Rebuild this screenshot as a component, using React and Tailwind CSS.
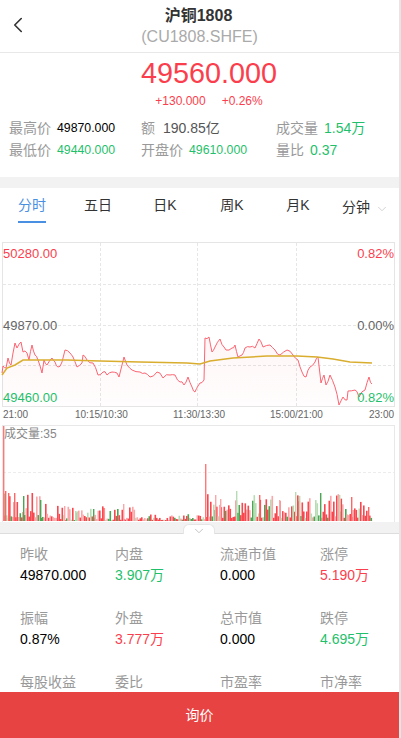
import React from "react";
import { ChevronDown, ChevronLeft } from "lucide-react";

const font = "font-['Liberation_Sans','Noto_Sans_CJK_SC',sans-serif]";

// price line, coordinates read off the chart
const pricePoints = [
  [2,373],[3,366],[6,368],[8,358],[11,365],[13,353],[15,343],[17,348],[21,342],[23,352],[27,353],[29,360],[32,345],[35,355],[38,360],[42,373],[44,360],[47,365],[52,358],[55,362],[58,367],[62,362],[65,350],[70,353],[73,357],[77,367],[82,363],[83,355],[87,360],[93,363],[98,375],[103,372],[107,375],[112,372],[117,373],[119,377],[124,357],[127,365],[132,370],[140,372],[145,373],[150,377],[157,372],[163,378],[170,375],[175,375],[180,382],[184,385],[188,377],[192,387],[195,392],[198,386],[200,383],[204,380],[205,338],[209,337],[212,352],[215,347],[220,339],[224,347],[226,350],[232,348],[235,345],[238,357],[242,355],[245,348],[250,347],[255,348],[259,339],[263,347],[270,345],[275,350],[280,355],[287,350],[293,355],[298,360],[302,372],[306,377],[310,367],[315,362],[318,357],[321,383],[324,375],[326,385],[330,375],[335,387],[339,405],[343,397],[347,400],[348,391],[355,390],[359,397],[365,390],[369,377],[372,384],
];

// average line
const avgPoints = [
  [2,375],[7,368],[15,365],[23,360],[67,360],[100,361],[140,362],[187,363],[200,364],[210,361],[233,358],[267,356],[297,356],[317,357],[333,359],[350,362],[372,363],
];

const toLine = (pts) => pts.map((p) => p.join(",")).join(" ");

// the small seeded generator keeps bars and jitter the same on each load
const makeRandom = (start) => {
  let seed = start;
  return () => {
    seed = (seed * 9301 + 49297) % 233280;
    return seed / 233280;
  };
};

// adds the fine zigzag between the read points
const jagged = (pts) => {
  const rand = makeRandom(11);
  const out = [];
  pts.forEach((p, i) => {
    out.push(p);
    const q = pts[i + 1];
    if (q && q[0] - p[0] >= 3 && Math.abs(q[1] - p[1]) < 20) {
      out.push([p[0] + (q[0] - p[0]) / 2, (p[1] + q[1]) / 2 + (rand() - 0.5) * 4]);
    }
  });
  return out;
};

const priceLine = jagged(pricePoints);

const volumeBars = () => {
  const next = makeRandom(35);
  const bars = [];
  for (let x = 3; x < 371; x += 1.5) {
    const r = next();
    let max = 14;
    if (x < 60) max = 26;
    else if (x > 205) max = 24;
    else if (x > 135) max = 6;
    const h = Math.pow(next(), 1.8) * max + (x > 205 || x < 60 ? 3 : 1);
    const color = r < 0.5 ? "#f8474e" : r < 0.66 ? "#4aa653" : r < 0.88 ? "#fba6a8" : "#b7dcb4";
    bars.push({ x, h, color });
  }
  return bars;
};

const tallBars = [
  { x: 3, h: 95, color: "#f77" },
  { x: 5, h: 30, color: "#f66" },
  { x: 8, h: 28, color: "#f66" },
  { x: 14, h: 28, color: "#f66" },
  { x: 23, h: 25, color: "#4aa653" },
  { x: 40, h: 21, color: "#4aa653" },
  { x: 64, h: 15, color: "#fba6a8" },
  { x: 75, h: 10, color: "#b7dcb4" },
  { x: 93, h: 12, color: "#4aa653" },
  { x: 103, h: 13, color: "#f66" },
  { x: 123, h: 17, color: "#fba6a8" },
  { x: 205, h: 57, color: "#f77" },
  { x: 215, h: 26, color: "#fba6a8" },
  { x: 220, h: 22, color: "#fba6a8" },
  { x: 236, h: 30, color: "#b7dcb4" },
  { x: 259, h: 26, color: "#f66" },
  { x: 279, h: 21, color: "#fba6a8" },
  { x: 295, h: 29, color: "#b7dcb4" },
  { x: 299, h: 25, color: "#b7dcb4" },
  { x: 320, h: 28, color: "#4aa653" },
  { x: 339, h: 26, color: "#b7dcb4" },
  { x: 351, h: 24, color: "#f66" },
  { x: 368, h: 14, color: "#f66" },
];

const Stat = ({ label, value, className, width }) => (
  <div className={`flex items-center ${width}`}>
    <span className="text-sm text-[#999] mr-[6px]">{label}</span>
    <span className={className}>{value}</span>
  </div>
);

const Quote = ({ label, value, color = "text-black" }) => (
  <div className="h-16">
    <div className="text-sm leading-5 text-[#999] whitespace-nowrap">{label}</div>
    <div className={`text-sm leading-5 mt-[1px] ${color}`}>{value}</div>
  </div>
);

const quotes = [
  ["昨收", "49870.000", "text-black"],
  ["内盘", "3.907万", "text-[#1fbf6b]"],
  ["流通市值", "0.000", "text-black"],
  ["涨停", "5.190万", "text-[#fb3e4d]"],
  ["振幅", "0.87%", "text-black"],
  ["外盘", "3.777万", "text-[#fb3e4d]"],
  ["总市值", "0.000", "text-black"],
  ["跌停", "4.695万", "text-[#1fbf6b]"],
  ["每股收益", "--", "text-black"],
  ["委比", "--", "text-black"],
  ["市盈率", "--", "text-black"],
  ["市净率", "--", "text-black"],
];

const tabs = [
  ["五日", "ml-[38px]"],
  ["日K", "ml-[39px]"],
  ["周K", "ml-[39px]"],
  ["月K", "ml-[38px]"],
];

export default function App() {
  return (
    <div className={`relative w-[401px] h-[738px] overflow-hidden bg-[#e6e6e6] ${font}`}>
      <div className="relative w-[399px] h-[738px] overflow-hidden bg-white">
        {/* header */}
        <div className="relative h-[53px] border-b border-[#e8e8e8] text-center">
          <ChevronLeft className="absolute left-[5px] top-[12px] w-[26px] h-[26px] text-[#333]" strokeWidth={1.5} />
          <div className="pt-[6px] pr-[2px] text-base leading-[20px] font-bold text-[#333]">沪铜1808</div>
          <div className="text-base leading-[21px] text-[#aaa]">(CU1808.SHFE)</div>
        </div>

        {/* price */}
        <div className="pl-[19px] text-center">
          <div className="text-[28.8px] leading-[40px] text-[#fb3e4d]">49560.000</div>
          <div className="flex justify-center gap-[16px] text-xs leading-[16px] text-[#fb3e4d]">
            <span>+130.000</span>
            <span>+0.26%</span>
          </div>
        </div>

        {/* stats */}
        <div className="pl-[9px] pt-[8px] h-[68px] leading-[22px]">
          <div className="flex h-[22px]">
            <Stat label="最高价" value="49870.000" className="text-[12.3px] text-black" width="w-[132px]" />
            <Stat label="额" value="190.85亿" className="text-sm text-[#555] ml-[2px]" width="w-[135px]" />
            <Stat label="成交量" value="1.54万" className="text-sm text-[#1fbf6b]" />
          </div>
          <div className="flex h-[22px]">
            <Stat label="最低价" value="49440.000" className="text-[12.3px] text-[#1fbf6b]" width="w-[132px]" />
            <Stat label="开盘价" value="49610.000" className="text-[12.3px] text-[#1fbf6b]" width="w-[135px]" />
            <Stat label="量比" value="0.37" className="text-sm text-[#1fbf6b]" />
          </div>
        </div>

        <div className="h-[11px] bg-[#f2f2f2]" />

        {/* tabs */}
        <div className="flex items-start h-[44px] text-sm text-[#333]">
          <div className="ml-[18px] w-[28px] h-[35px] pt-[7px] leading-5 text-center text-[#4a90e2] border-b-2 border-[#4a90e2] whitespace-nowrap">分时</div>
          {tabs.map(([tab, margin]) => (
            <div key={tab} className={`pt-[7px] leading-5 text-center whitespace-nowrap w-[28px] ${margin}`}>
              {tab}
            </div>
          ))}
          <div className="ml-[30px] pt-[9px] leading-5 whitespace-nowrap">分钟</div>
          <ChevronDown className="ml-[5px] mt-[14px] w-[14px] h-[14px] text-[#ccc]" strokeWidth={1.5} />
        </div>

        {/* main chart */}
        <div className="relative mt-[10px] ml-[2px] w-[393px] h-[165px] border border-[#e5e5e5]">
          <svg className="absolute left-[-3px] top-[-243px] w-[401px] h-[440px]" viewBox="0 0 401 440">
            <defs>
              <linearGradient id="fill" x1="0" y1="0" x2="0" y2="1">
                <stop offset="0" stopColor="#fb3e4d" stopOpacity="0.05" />
                <stop offset="1" stopColor="#fb3e4d" stopOpacity="0.01" />
              </linearGradient>
            </defs>
            <path d="M3 284.5H394M3 365.5H394M3 325.5H394" stroke="#e6e6e6" strokeDasharray="3 2" fill="none" />
            <path d="M100.5 243V407M197.5 243V407M296.5 243V407" stroke="#e6e6e6" strokeDasharray="3 2" fill="none" />
            <polygon points={`2,406 ${toLine(priceLine)} 372,406`} fill="url(#fill)" />
            <polyline points={toLine(priceLine)} fill="none" stroke="#fb6572" strokeWidth="1" />
            <polyline points={toLine(avgPoints)} fill="none" stroke="#d9ad2e" strokeWidth="1.5" />
          </svg>
          <span className="absolute left-0 top-[3px] text-[13px] leading-4 text-[#fb3e4d]">50280.00</span>
          <span className="absolute right-0 top-[3px] text-[13px] leading-4 text-[#fb3e4d]">0.82%</span>
          <span className="absolute left-0 top-[75px] text-[13px] leading-4 text-[#666]">49870.00</span>
          <span className="absolute right-0 top-[75px] text-[13px] leading-4 text-[#666]">0.00%</span>
          <span className="absolute left-0 top-[147px] text-[13px] leading-4 text-[#1fbf6b]">49460.00</span>
          <span className="absolute right-0 top-[147px] text-[13px] leading-4 text-[#1fbf6b]">0.82%</span>
        </div>

        {/* time axis */}
        <div className="relative h-[18px] text-[10px] leading-[14px] text-[#666]">
          <span className="absolute left-[3px] top-[1px]">21:00</span>
          <span className="absolute left-[75px] top-[1px]">10:15/10:30</span>
          <span className="absolute left-[173px] top-[1px]">11:30/13:30</span>
          <span className="absolute left-[270px] top-[1px]">15:00/21:00</span>
          <span className="absolute left-[369px] top-[1px]">23:00</span>
        </div>

        {/* volume chart */}
        <div className="relative ml-[2px] w-[393px] h-[97px] border border-[#e8e8e8] border-b-0">
          <svg className="absolute left-[-3px] top-[-1px] w-[401px] h-[97px]" viewBox="0 425 401 97">
            <path d="M3 472.5H394" stroke="#ececec" strokeDasharray="3 2" fill="none" />
            {volumeBars().map((b, i) => (
              <rect key={i} x={b.x} y={521 - b.h} width="1.6" height={b.h} fill={b.color} />
            ))}
            {tallBars.map((b, i) => (
              <rect key={i} x={b.x} y={521 - b.h} width="1.4" height={b.h} fill={b.color} />
            ))}
          </svg>
          <span className="absolute left-[1px] top-0 text-xs leading-4 text-[#888]">成交量:35</span>
        </div>

        {/* collapse strip */}
        <div className="relative h-[12px] bg-[#f2f2f2] border-b border-[#ddd]">
          <div className="absolute left-[183px] top-[2px] w-[32px] h-[10px] bg-white border border-[#e5e5e5] border-b-0 rounded-t-md flex justify-center">
            <ChevronDown className="w-[14px] h-[14px] -mt-[1px] text-[#bbb]" strokeWidth={1.5} />
          </div>
        </div>

        {/* quote table */}
        <div className="grid grid-cols-[95px_105px_100px_1fr] pl-[20px] pt-[10px]">
          {quotes.map(([label, value, color]) => (
            <Quote key={label} label={label} value={value} color={color} />
          ))}
        </div>

        {/* bottom button, stays over the table */}
        <div className="absolute left-0 bottom-0 w-full h-[46px] bg-[#e84343] text-white text-sm flex items-center justify-center">
          询价
        </div>
      </div>
    </div>
  );
}
